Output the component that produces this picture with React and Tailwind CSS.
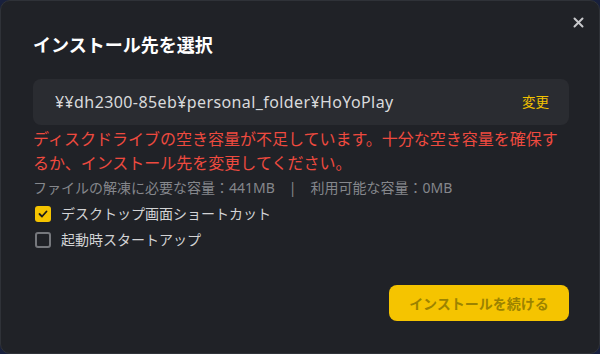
import React, { useState } from 'react';

export default function App() {
  const [desktop, setDesktop] = useState(true);
  const [startup, setStartup] = useState(false);

  return (
    <div className="w-[600px] h-[354px] bg-[#18203d]" style={{ fontFamily: '"Noto Sans", "Noto Sans CJK JP", sans-serif' }}>
      <div className="relative w-full h-full rounded-[10px] bg-[#202227] border border-[#2f3238] flex flex-col pl-[32px] pr-[30px]">
        {/* Close button */}
        <button className="absolute right-[13px] top-[13px] w-4 h-4 flex items-center justify-center text-[#c8c9cc]">
          <svg width="11" height="11" viewBox="0 0 11 11" fill="none" stroke="currentColor" strokeWidth="2" strokeLinecap="round">
            <path d="M1.5 1.5L9.5 9.5M9.5 1.5L1.5 9.5" />
          </svg>
        </button>

        <h2 className="mt-[31px] text-[18px] leading-[26px] font-bold text-white">インストール先を選択</h2>

        {/* Install path */}
        <div className="mt-[21px] h-[46px] rounded-[8px] bg-[#2a2c31] flex items-center justify-between pl-[22px] pr-[20px]">
          <span className="text-[16px] text-[#d9dadc] tracking-[0.4px]">¥¥dh2300-85eb¥personal_folder¥HoYoPlay</span>
          <span className="text-[13.5px] text-[#f2c200]">変更</span>
        </div>

        {/* Warning */}
        <p className="mt-[2px] text-[16px] leading-[24px] text-[#ee4a3f]">
          ディスクドライブの空き容量が不足しています。十分な空き容量を確保するか、インストール先を変更してください。
        </p>

        <p className="mt-[3px] text-[14px] leading-[20px] text-[#85878c]">
          ファイルの解凍に必要な容量：441MB　|　利用可能な容量：0MB
        </p>

        {/* Options */}
        <div className="mt-[7px] flex flex-col gap-[8px]">
          <label className="flex items-center gap-[10px] cursor-pointer" onClick={() => setDesktop(!desktop)}>
            <span className={`ml-[2px] w-[16px] h-[16px] rounded-[3px] flex items-center justify-center ${desktop ? 'bg-[#f5c400]' : 'border-2 border-[#76787d]'}`}>
              {desktop && (
                <svg width="10" height="8" viewBox="0 0 10 8" fill="none" stroke="#1b1b1b" strokeWidth="1.8" strokeLinecap="round" strokeLinejoin="round">
                  <path d="M1.5 4L4 6.5L8.5 1.5" />
                </svg>
              )}
            </span>
            <span className="text-[14px] leading-[18px] text-[#d2d3d5]">デスクトップ画面ショートカット</span>
          </label>
          <label className="flex items-center gap-[10px] cursor-pointer" onClick={() => setStartup(!startup)}>
            <span className={`ml-[2px] w-[16px] h-[16px] rounded-[3px] flex items-center justify-center ${startup ? 'bg-[#f5c400]' : 'border-2 border-[#76787d]'}`}>
              {startup && (
                <svg width="10" height="8" viewBox="0 0 10 8" fill="none" stroke="#1b1b1b" strokeWidth="1.8" strokeLinecap="round" strokeLinejoin="round">
                  <path d="M1.5 4L4 6.5L8.5 1.5" />
                </svg>
              )}
            </span>
            <span className="text-[14px] leading-[18px] text-[#d2d3d5]">起動時スタートアップ</span>
          </label>
        </div>

        {/* Footer */}
        <div className="mt-auto mb-[32px] flex justify-end">
          <button className="w-[180px] h-[36px] rounded-[8px] bg-[#f5c400] text-[14px] font-bold text-[#9c8300]">
            インストールを続ける
          </button>
        </div>
      </div>
    </div>
  );
}
